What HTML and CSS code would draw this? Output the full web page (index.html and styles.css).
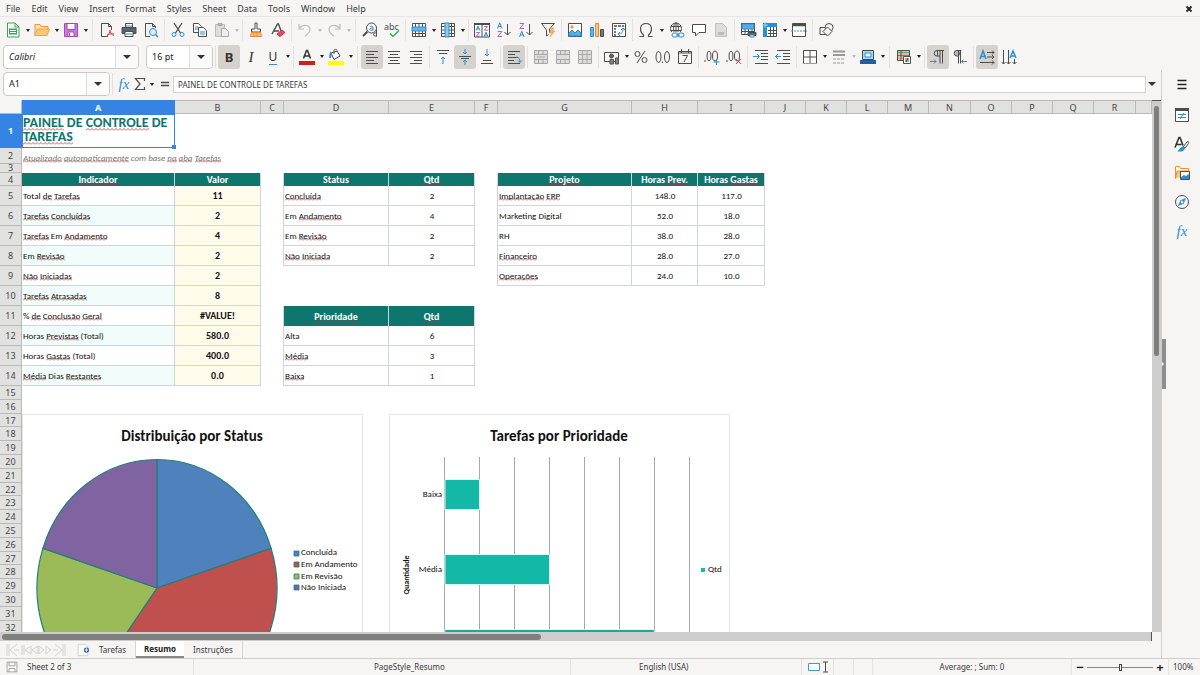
FILE: index.html
```html
<!DOCTYPE html>
<html lang="pt-BR">
<head>
<meta charset="utf-8">
<title>Resumo</title>
<link rel="stylesheet" href="styles.css">
</head>
<body>
<header class="top">
  <nav class="menubar" aria-label="Menu">
    <button>File</button><button>Edit</button><button>View</button><button>Insert</button><button>Format</button><button>Styles</button><button>Sheet</button><button>Data</button><button>Tools</button><button>Window</button><button>Help</button>
    <button class="close" aria-label="Close"><svg width="8" height="8" viewBox="0 0 8 8"><path d="M1.500 1.500l5 5M6.500 1.500l-5 5" stroke="#222" stroke-width="1.800"/></svg></button>
  </nav>

  <div class="toolbar" role="toolbar" aria-label="Standard">
    <button class="tool" aria-label="New"><svg viewBox="0 0 16 16"><path d="M2.500 1h7.500l4 4v10H2.500z" fill="#fff" stroke="#2fa84f"/><path d="M10 1v4h4" stroke="#2fa84f"/><path d="M4 6.500h8v6H4z" fill="#35a852" stroke="none"/><path d="M5 8.500h6M5 10.500h6" stroke="#fff"/></svg></button><button class="drop" aria-label="New options"></button>
    <button class="tool" aria-label="Open"><svg viewBox="0 0 16 16"><path d="M1 13V2.500h5l1 2h7V7" fill="#fde0b0" stroke="#e8973c"/><path d="M.5 13.500L3.500 7h12L13 13.500z" fill="#fbc877" stroke="#eda34f"/></svg></button><button class="drop" aria-label="Open options"></button>
    <button class="tool" aria-label="Save"><svg viewBox="0 0 16 16"><path d="M1.500 1.500h13v13h-13z" fill="#c77fd6" stroke="#a04db5"/><path d="M4 1.500h8v6H4z" fill="#fff" stroke="#a04db5"/><path d="M5 10h6v4.500H5z" fill="#fff" stroke="#a04db5"/><path d="M6.500 11v3" stroke="#a04db5"/></svg></button><button class="drop" aria-label="Save options"></button>
    <i class="sep wide"></i>
    <button class="tool" aria-label="Export PDF"><svg viewBox="0 0 16 16"><path d="M9 14.500H2.500v-13h7l3 3V8M9.500 1.500v3h3"/><path d="M7 15c3-2 4-5 4-7M11 8c0 3 2 5 4 5.500M8 13c2-1 4-1.500 7-1" stroke="#e03c3c"/></svg></button>
    <button class="tool" aria-label="Print"><svg viewBox="0 0 16 16"><path d="M4.500 5V1.500h7V5" fill="#fff"/><path d="M1 5.500h14v6H1z" fill="#5c6165" stroke="#4d4d4d"/><path d="M4 9.500h8v5H4z" fill="#fff"/><path d="M5 4h6M5 12h6" stroke="#2b8fd6"/></svg></button>
    <button class="tool" aria-label="Print preview"><svg viewBox="0 0 16 16"><path d="M7 14.500H2.500v-13h7l3 3V6M9.500 1.500v3h3"/><circle cx="10" cy="10" r="3.500" fill="#d9effb" stroke="#2b8fd6"/><path d="M12.500 12.500l2.500 2.500" stroke="#2b8fd6" stroke-width="1.500"/></svg></button>
    <i class="sep"></i>
    <button class="tool" aria-label="Cut"><svg viewBox="0 0 16 16"><path d="M4 1l6.500 10M12 1L5.500 11" stroke-width="1.300"/><circle cx="4" cy="12.500" r="2" stroke="#2b8fd6"/><circle cx="12" cy="12.500" r="2" stroke="#2b8fd6"/></svg></button>
    <button class="tool" aria-label="Copy"><svg viewBox="0 0 16 16"><path d="M1.500 1.500h5l3 3v6h-8z" fill="#fff"/><path d="M6.500 5.500h5l3 3v6h-8z" fill="#fff"/><path d="M3 5h3M3 7h3M8 10h5M8 12h5" stroke="#2b8fd6"/></svg></button>
    <button class="tool off" aria-label="Paste"><svg viewBox="0 0 16 16"><path d="M1.500 2.500h9v12h-9z" fill="#ddd" stroke="#bbb"/><path d="M4 1.500h4v2H4z" fill="#bbb" stroke="#aaa"/><path d="M7.500 6.500h4l3 3v5h-7z" fill="#eee" stroke="#aaa"/></svg></button><button class="drop off" aria-label="Paste options"></button>
    <i class="sep"></i>
    <button class="tool" aria-label="Clone formatting"><svg viewBox="0 0 16 16"><path d="M7 1h2v6h3.500v3h-9V7H7z" fill="#fff"/><path d="M3.500 10.500h9l1 4h-11z" fill="#fbc877" stroke="#e8873c"/><path d="M6 11v3M9 11v3" stroke="#e8873c"/></svg></button>
    <button class="tool" aria-label="Clear formatting"><svg viewBox="0 0 16 16"><path d="M2 12L7.500 2h1L11 9M4 9h5" stroke-width="1.400"/><path d="M7 12l5-4 3 2.500-5 4z" fill="#e84a5f" stroke="#c9344a"/></svg></button>
    <i class="sep"></i>
    <button class="tool" aria-label="Undo"><svg viewBox="0 0 16 16"><path d="M2 2v5h5M2 7c3-5 11-5 11 1 0 3-3 4-5 6.500" stroke="#bdbdbd" stroke-width="1.200"/></svg></button><button class="drop off" aria-label="Undo options"></button>
    <button class="tool" aria-label="Redo"><svg viewBox="0 0 16 16"><path d="M14 2v5H9M14 7C11 2 3 2 3 8c0 3 3 4 5 6.500" stroke="#bdbdbd" stroke-width="1.200"/></svg></button><button class="drop off" aria-label="Redo options"></button>
    <i class="sep wide"></i>
    <button class="tool" aria-label="Find and replace"><svg viewBox="0 0 16 16"><circle cx="9.500" cy="6" r="5"/><path d="M5.500 9.500L1 14" stroke-width="2"/><path d="M8 4.500c3-1 3 0 3 4M11 6c-4 0-4 2.500-1.500 2.500L11 7.500" stroke="#2b8fd6"/><path d="M14.500 7.500v7M14.500 11c-4-1-4 4 0 3"/></svg></button>
    <button class="tool" aria-label="Spelling"><svg viewBox="0 0 16 16"><text x="0" y="8" class="glyph">abc</text><path d="M6 11.500l3 3 6-6" stroke="#2fb463" stroke-width="1.500"/></svg></button>
    <i class="sep"></i>
    <button class="tool" aria-label="Row"><svg viewBox="0 0 16 16"><path d="M1.500 1.500h13v13h-13zM1.500 11.500h13M4.500 1.500v13M8 1.500v13M11.500 1.500v13" fill="#fff"/><path d="M1 5h14v4H1z" fill="#66b4ea" stroke="#2b8fd6"/></svg></button><button class="drop" aria-label="Row options"></button>
    <button class="tool" aria-label="Column"><svg viewBox="0 0 16 16"><path d="M1.500 1.500h13v13h-13zM1.500 4.500h13M1.500 8h13M1.500 11.500h13M11.500 1.500v13" fill="#fff"/><path d="M5 1h4v14H5z" fill="#8cc8f0" stroke="#2b8fd6"/></svg></button><button class="drop" aria-label="Column options"></button>
    <i class="sep"></i>
    <button class="tool" aria-label="Sort"><svg viewBox="0 0 16 16"><path d="M.5 1.500h15v13.500H.5zM8 2v13" fill="#fff"/><path d="M0 2h16" stroke-width="2"/><path d="M2.200 8.500L4 4l1.800 4.500M2.800 7h2.400M10.200 14.500L12 10l1.800 4.500M10.800 13h2.400" stroke="#2b8fd6"/><path d="M2.300 10.500h3.400l-3.400 3.700h3.600M10.300 4.500h3.400l-3.400 3.700h3.600" stroke="#b65bc4"/></svg></button>
    <button class="tool" aria-label="Sort ascending"><svg viewBox="0 0 16 16"><path d="M1.500 6.500L3.800 .8l2.300 5.700M2.400 4.500h2.800" stroke="#2b8fd6"/><path d="M1.800 9.500h4l-4 5h4.200" stroke="#b65bc4"/><path d="M11.500 2v11M8.500 10l3 3 3-3"/></svg></button>
    <button class="tool" aria-label="Sort descending"><svg viewBox="0 0 16 16"><path d="M1.500 15L3.800 9.300 6.100 15M2.400 13h2.800" stroke="#2b8fd6"/><path d="M1.800 1.500h4l-4 5h4.200" stroke="#b65bc4"/><path d="M11.500 2v11M8.500 10l3 3 3-3"/></svg></button>
    <button class="tool" aria-label="AutoFilter"><svg viewBox="0 0 16 16"><path d="M1.500 1.500h13L9.500 7v4M1.500 1.500L6.500 8v6l2-1.500" fill="none"/><path d="M12 6l-3 5h3l-2 4 5-6h-3l2-3z" fill="#fbb04c" stroke="#ef8d34" stroke-width=".5"/></svg></button>
    <i class="sep"></i>
    <button class="tool" aria-label="Image"><svg viewBox="0 0 16 16"><path d="M1.500 1.500h13v13h-13z" fill="#fff"/><path d="M2 14v-3l3-3 3 3 3-3 3 3v3z" fill="#58aee8" stroke="#2b8fd6"/><circle cx="5" cy="5" r="1.200" fill="#fbb04c" stroke="#ef8d34"/></svg></button>
    <button class="tool" aria-label="Chart"><svg viewBox="0 0 16 16"><path d="M1.500 5.500h3v9h-3z" fill="#66b4ea" stroke="#2b8fd6"/><path d="M6.500 1.500h3v13h-3z" fill="#fbc877" stroke="#e8873c"/><path d="M11.500 7.500h3v7h-3z" fill="#777"/></svg></button>
    <button class="tool" aria-label="Pivot table"><svg viewBox="0 0 16 16"><path d="M1.500 1.500h13v13h-13z" fill="#fff"/><path d="M3 4h10" stroke="#777" stroke-width="2" stroke-dasharray="3 1"/><path d="M4 6v8" stroke="#777" stroke-width="2" stroke-dasharray="2 1"/><path d="M7 12c4 0 5-2 5-5M10 8l2-2 2 2M9 10l-2 2 2 2" stroke="#2b8fd6"/></svg></button>
    <i class="sep"></i>
    <button class="tool" aria-label="Special character"><svg viewBox="0 0 16 16"><path d="M1.500 14.500h4V13C1 9 1.500 1.500 8 1.500S15 9 10.500 13v1.500h4" stroke-width="1.200"/></svg></button><button class="drop wide" aria-label="Character options"></button>
    <button class="tool" aria-label="Hyperlink"><svg viewBox="0 0 16 16"><circle cx="7" cy="6.500" r="5.500"/><ellipse cx="7" cy="6.500" rx="2.500" ry="5.500"/><path d="M2 4.500h10M2 8.500h10M7 1v11"/><path d="M3 10h13v6H3z" fill="#f6f5f4" stroke="none"/><rect x="3" y="11" width="6" height="4" rx="2" stroke="#2b8fd6"/><rect x="9" y="11" width="6" height="4" rx="2" stroke="#2b8fd6"/><path d="M7 13h4" stroke="#2b8fd6"/></svg></button>
    <button class="tool" aria-label="Comment"><svg viewBox="0 0 16 16"><path d="M1.500 2.500h13v8H8L4.500 14v-3.500h-3z" fill="#fff"/></svg></button>
    <button class="tool" aria-label="Headers and footers"><svg viewBox="0 0 16 16"><path d="M2.500 1.500h7l4 4v9h-11z" fill="#dcdcdc" stroke="#c0c0c0"/><path d="M5 10h6v3H5z" fill="#bdbdbd" stroke="none"/></svg></button>
    <i class="sep"></i>
    <button class="tool" aria-label="Print area"><svg viewBox="0 0 16 16"><path d="M1.500 1.500h13v11h-13zM1.500 9.500h13M5 1v11M8.500 1v11M12 1v11" fill="#fff"/><path d="M2 2h12v5H2z" fill="#59aee8" stroke="#2b8fd6"/><path d="M8 10.500h8v3H8z" fill="#5c6165"/><path d="M10 13h4v2h-4z" fill="#fff" stroke="#2b8fd6"/></svg></button>
    <button class="tool" aria-label="Freeze rows and columns"><svg viewBox="0 0 16 16"><path d="M1.500 1.500h13v13h-13zM6 8.500h9M6 11.500h9M8.500 5v10M11.500 5v10" fill="#fff"/><path d="M1 1h14v4H5v10H1z" fill="#2b8fd6" stroke="none"/><path d="M3 0v6M0 3h6" stroke="#9bd3f7"/></svg></button><button class="drop" aria-label="Freeze options"></button>
    <button class="tool" aria-label="Split window"><svg viewBox="0 0 16 16"><path d="M1.500 1.500h13v13h-13z" fill="#fff"/><path d="M1 3h14" stroke-width="2.500"/><path d="M0 9h16" stroke="#2b8fd6" stroke-dasharray="2 1"/></svg></button>
    <i class="sep"></i>
    <button class="tool" aria-label="Draw functions"><svg viewBox="0 0 16 16"><path d="M2 5.500h7.500v7H2z" fill="#f6f5f4"/><circle cx="11" cy="5.500" r="4" fill="#f6f5f4"/><path d="M9.500 5l4.500 4.500L9.500 14 5 9.500z" fill="#f6f5f4"/></svg></button>
  </div>

  <div class="toolbar format" role="toolbar" aria-label="Formatting">
    <label class="combo font"><select aria-label="Font name"><option>Calibri</option></select></label>
    <label class="combo size"><select aria-label="Font size"><option>16 pt</option></select></label>
    <i class="sep"></i>
    <button class="tool on" aria-label="Bold"><span class="letter bold">B</span></button>
    <button class="tool" aria-label="Italic"><span class="letter ital">I</span></button>
    <button class="tool" aria-label="Underline"><span class="letter under">U</span></button><button class="drop" aria-label="Underline options"></button>
    <i class="sep"></i>
    <button class="tool" aria-label="Font color"><svg viewBox="0 0 16 16"><path d="M4.500 9.500L7.500 1.500h1l3 8M5.500 7h5" stroke="#333" stroke-width="1.500"/><path d="M0 12h16v4H0z" fill="#c9211e" stroke="none"/></svg></button><button class="drop" aria-label="Font color options"></button>
    <button class="tool" aria-label="Background color"><svg viewBox="0 0 16 16"><path d="M3 4l6-2 3 5-6 3.500z" fill="#fff"/><path d="M6 5V1.500c0-1.500 3-1.500 3 0"/><path d="M3 3L2 9" stroke="#2b8fd6" stroke-width="2"/><path d="M0 12h16v4H0z" fill="#ff0" stroke="none"/></svg></button><button class="drop" aria-label="Background color options"></button>
    <i class="sep wide"></i>
    <button class="tool on" aria-label="Align left"><svg viewBox="0 0 16 16"><path d="M2 2.500h12M2 5.500h8M2 8.500h12M2 11.500h8M2 14.500h12"/></svg></button>
    <button class="tool" aria-label="Align center"><svg viewBox="0 0 16 16"><path d="M2 2.500h12M4 5.500h8M2 8.500h12M4 11.500h8M2 14.500h12"/></svg></button>
    <button class="tool" aria-label="Align right"><svg viewBox="0 0 16 16"><path d="M2 2.500h12M6 5.500h8M2 8.500h12M6 11.500h8M2 14.500h12"/></svg></button>
    <i class="sep"></i>
    <button class="tool" aria-label="Align top"><svg viewBox="0 0 16 16"><path d="M2 1.500h12M4 4.500h8"/><path d="M8 15V8M6 10l2-2 2 2" stroke="#2b8fd6"/></svg></button>
    <button class="tool on" aria-label="Center vertically"><svg viewBox="0 0 16 16"><path d="M2 7.500h12M4 9.500h8"/><path d="M8 0v5M6 3l2 2 2-2M8 16v-5M6 13l2-2 2 2" stroke="#2b8fd6"/></svg></button>
    <button class="tool" aria-label="Align bottom"><svg viewBox="0 0 16 16"><path d="M4 11.500h8M2 14.500h12"/><path d="M8 0v7M6 5l2 2 2-2" stroke="#2b8fd6"/></svg></button>
    <i class="sep"></i>
    <button class="tool on" aria-label="Wrap text"><svg viewBox="0 0 16 16"><path d="M2 2.500h12M2 5.500h7M2 8.500h10M2 11.500h6M2 14.500h12"/><path d="M10 8c3 0 4 2 4 5M12 11.500l2 2 2-2" stroke="#2b8fd6"/></svg></button>
    <i class="sep"></i>
    <button class="tool off" aria-label="Merge and center"><svg viewBox="0 0 16 16"><path d="M1.500 1.500h13v13h-13zM1.500 5.500h13M1.500 10.500h13M5.500 1.500v4M10 1.500v4M5.500 10.500v4M10 10.500v4M4 8h8" fill="#ddd" stroke="#a8a8a8"/></svg></button>
    <button class="tool off" aria-label="Merge cells"><svg viewBox="0 0 16 16"><path d="M1.500 1.500h13v13h-13zM1.500 5.500h13M1.500 10.500h13M5.500 1.500v4M10 1.500v4M5.500 10.500v4M10 10.500v4" fill="#ddd" stroke="#a8a8a8"/></svg></button>
    <button class="tool off" aria-label="Split cells"><svg viewBox="0 0 16 16"><path d="M1.500 1.500h13v13h-13zM1.500 5.500h13M1.500 10.500h13M5.500 1.500v13M10 1.500v13" fill="#ddd" stroke="#a8a8a8"/></svg></button>
    <i class="sep"></i>
    <button class="tool" aria-label="Currency"><svg viewBox="0 0 16 16"><path d="M.5 3.500h14v9H.500z"/><circle cx="7.500" cy="7" r="2" fill="#666"/><path d="M6 10.500h3.500V15H6zM11.500 9h3v6h-3z" fill="#888"/></svg></button><button class="drop" aria-label="Currency options"></button>
    <button class="tool" aria-label="Percent"><svg viewBox="0 0 16 16"><circle cx="4.500" cy="5" r="2.500"/><circle cx="11.500" cy="11" r="2.500"/><path d="M12 2L4 14"/></svg></button>
    <button class="tool" aria-label="Number"><svg viewBox="0 0 16 16"><ellipse cx="3.500" cy="8" rx="2.500" ry="5.500"/><ellipse cx="12" cy="8" rx="2.500" ry="5.500"/><path d="M7.500 12.500v1.500"/></svg></button>
    <button class="tool" aria-label="Date"><svg viewBox="0 0 16 16"><path d="M1.500 2.500h13v12h-13zM4.500 0v4M11.500 0v4M1.500 4h13M5.500 6.500h5L7 13"/></svg></button>
    <i class="sep"></i>
    <button class="tool" aria-label="Add decimal place"><svg viewBox="0 0 16 16"><ellipse cx="5" cy="7" rx="2" ry="5"/><ellipse cx="11" cy="7" rx="2.500" ry="5"/><path d="M1 11v2"/><path d="M12.500 10v6M9.500 13h6" stroke="#2b8fd6"/></svg></button>
    <button class="tool" aria-label="Delete decimal place"><svg viewBox="0 0 16 16"><ellipse cx="5" cy="7" rx="2" ry="5"/><ellipse cx="11" cy="7" rx="2.500" ry="5"/><path d="M1 11v2"/><path d="M10 10l5 5M15 10l-5 5" stroke="#e03c3c"/></svg></button>
    <i class="sep"></i>
    <button class="tool" aria-label="Increase indent"><svg viewBox="0 0 16 16"><path d="M2 1.500h13M8 4.500h7M8 7.500h7M8 10.500h7M2 14.500h13"/><path d="M0 7.500h6M4 5l2.500 2.500L4 10" stroke="#2b8fd6"/></svg></button>
    <button class="tool" aria-label="Decrease indent"><svg viewBox="0 0 16 16"><path d="M2 1.500h13M8 4.500h7M8 7.500h7M8 10.500h7M2 14.500h13"/><path d="M0 7.500h6M3 5L.5 7.500 3 10" stroke="#2b8fd6"/></svg></button>
    <i class="sep"></i>
    <button class="tool" aria-label="Borders"><svg viewBox="0 0 16 16"><path d="M1.500 1.500h13v13h-13zM8 1.500v13M1.500 8h13" fill="#fff"/><path d="M1 14.500h14" stroke="#e8873c"/></svg></button><button class="drop" aria-label="Border options"></button>
    <button class="tool" aria-label="Border style"><svg viewBox="0 0 16 16"><path d="M2 2.500h12M2 6h12" stroke="#999" stroke-width="2"/><path d="M2 10h12M2 14h12" stroke="#999" stroke-dasharray="3 1"/></svg></button><button class="drop off" aria-label="Border style options"></button>
    <button class="tool" aria-label="Border color"><svg viewBox="0 0 16 16"><path d="M2.500 1.500h11v9h-11z" fill="#aed8f5" stroke="#444"/><path d="M5 4h6v4H5z" fill="#f6f5f4" stroke="#2b8fd6"/><path d="M0 11h16v4H0z" fill="#1f5fa8" stroke="none"/></svg></button><button class="drop" aria-label="Border color options"></button>
    <i class="sep wide"></i>
    <button class="tool" aria-label="Conditional formatting"><svg viewBox="0 0 16 16"><path d="M1.500 1.500h12v10h-12z" fill="#fff"/><path d="M2 3.500h11" stroke="#4db36b" stroke-width="2"/><path d="M2 6.500h11" stroke="#e2574c" stroke-width="2"/><path d="M2 9.500h5" stroke="#eda34f" stroke-width="2"/><path d="M5 1v11"/><path d="M7.500 7.500h7v7h-7z" fill="#fff"/><path d="M9 10h4M9 12h4M12 9l-2 4"/></svg></button><button class="drop" aria-label="Conditional options"></button>
    <i class="sep"></i>
    <button class="tool on" aria-label="Left to right"><svg viewBox="0 0 16 16"><path d="M7.500 7V1.500M14 1.500H7a2.800 2.800 0 0 0 0 5.600h3M10 1.500v13M12.500 1.500v13"/><path d="M0 12.500h6M4 10.500l2 2-2 2" stroke="#2b8fd6"/></svg></button>
    <button class="tool" aria-label="Right to left"><svg viewBox="0 0 16 16"><path d="M9 1.500H5a2.800 2.800 0 0 0 0 5.600h1.500z" fill="#bbb"/><path d="M6.500 1.500v13M8.500 1.500v13"/><path d="M9 12.500h6M11.500 10.500l-2 2 2 2" stroke="#2b8fd6"/></svg></button>
    <i class="sep"></i>
    <button class="tool on" aria-label="Text direction left to right"><svg viewBox="0 0 16 16"><path d="M1 10L4 2l3 8M2 7.500h4" stroke="#2b8fd6" stroke-width="1.500"/><path d="M8 3.500h7M8 8h7M1 13.500h14M13 1.500l2 2-2 2M13 6l2 2-2 2M13 11.500l2 2-2 2"/></svg></button>
    <button class="tool" aria-label="Text direction top to bottom"><svg viewBox="0 0 16 16"><path d="M9 9l3-7 3 7M10 7h4" stroke="#2b8fd6" stroke-width="1.500"/><path d="M2.500 1v14M7.500 1v14M13.500 10v5M.5 13l2 2 2-2M5.500 13l2 2 2-2M11.500 13l2 2 2-2"/></svg></button>
  </div>
</header>

<main class="work">
  <section class="doc">
    <div class="formula">
      <div class="namebox"><input aria-label="Name box" value="A1"><button aria-label="Name list"></button></div>
      <i class="sep"></i>
      <button class="tool wizard" aria-label="Function wizard"><span class="fx">fx</span></button>
      <button class="tool sum" aria-label="Select function"><svg viewBox="0 0 16 16"><path d="M12.500 5V2.500h-9L8 8l-4.500 5.500h9V11" stroke-width="1.200"/></svg></button><button class="drop wide" aria-label="Sum options"></button>
      <button class="tool equals" aria-label="Formula"><svg viewBox="0 0 16 16"><path d="M4 6.500h8M4 9.500h8" stroke-width="1.500"/></svg></button>
      <input class="line" aria-label="Input line" value="PAINEL DE CONTROLE DE TAREFAS">
      <button class="expand" aria-label="Expand formula bar"></button>
    </div>

    <div class="view">
      <div class="sheet">
        <table class="grid">
          <colgroup><col class="w22"><col class="w153"><col class="w86"><col class="w23"><col class="w105"><col class="w86"><col class="w23"><col class="w134"><col class="w66"><col class="w67"><col class="w41"><col class="w41"><col class="w41"><col class="w41"><col class="w42"><col class="w41"><col class="w41"><col class="w41"><col class="w42"><col></colgroup>
          <thead><tr><th class="corner"></th><th class="sel">A</th><th>B</th><th>C</th><th>D</th><th>E</th><th>F</th><th>G</th><th>H</th><th>I</th><th>J</th><th>K</th><th>L</th><th>M</th><th>N</th><th>O</th><th>P</th><th>Q</th><th>R</th><th></th></tr></thead>
          <tbody>
            <tr class="r34"><th class="sel">1</th><td class="title"><u>PAINEL</u> DE <u>CONTROLE</u> DE <u>TAREFAS</u></td></tr>
            <tr class="r16"><th>2</th><td class="note" colspan="3"><u>Atualizado</u> <u>automaticamente</u> com base <u>na</u> <u>aba</u> <u>Tarefas</u></td></tr>
            <tr class="r9"><th>3</th></tr>
            <tr class="r13"><th>4</th><td class="h"><u>Indicador</u></td><td class="h">Valor</td><td class="edge"></td><td class="h">Status</td><td class="h"><u>Qtd</u></td><td class="edge"></td><td class="h"><u>Projeto</u></td><td class="h">Horas <u>Prev.</u></td><td class="h">Horas <u>Gastas</u></td></tr>
            <tr class="r20"><th>5</th><td class="c">Total <u>de</u> <u>Tarefas</u></td><td class="v">11</td><td class="edge"></td><td class="c"><u>Concluída</u></td><td class="c n">2</td><td class="edge"></td><td class="c"><u>Implantação</u> <u>ERP</u></td><td class="c n">148.0</td><td class="c n">117.0</td></tr>
            <tr class="r20"><th>6</th><td class="c alt"><u>Tarefas</u> <u>Concluídas</u></td><td class="v">2</td><td class="edge"></td><td class="c">Em <u>Andamento</u></td><td class="c n">4</td><td class="edge"></td><td class="c">Marketing Digital</td><td class="c n">52.0</td><td class="c n">18.0</td></tr>
            <tr class="r20"><th>7</th><td class="c"><u>Tarefas</u> Em <u>Andamento</u></td><td class="v">4</td><td class="edge"></td><td class="c">Em <u>Revisão</u></td><td class="c n">2</td><td class="edge"></td><td class="c">RH</td><td class="c n">38.0</td><td class="c n">28.0</td></tr>
            <tr class="r20"><th>8</th><td class="c alt">Em <u>Revisão</u></td><td class="v">2</td><td class="edge"></td><td class="c"><u>Não</u> <u>Iniciada</u></td><td class="c n">2</td><td class="edge"></td><td class="c"><u>Financeiro</u></td><td class="c n">28.0</td><td class="c n">27.0</td></tr>
            <tr class="r20"><th>9</th><td class="c"><u>Não</u> <u>Iniciadas</u></td><td class="v">2</td><td></td><td></td><td></td><td class="edge"></td><td class="c"><u>Operações</u></td><td class="c n">24.0</td><td class="c n">10.0</td></tr>
            <tr class="r20"><th>10</th><td class="c alt"><u>Tarefas</u> <u>Atrasadas</u></td><td class="v">8</td></tr>
            <tr class="r20"><th>11</th><td class="c">% <u>de</u> <u>Conclusão</u> <u>Geral</u></td><td class="v">#VALUE!</td><td class="edge"></td><td class="h"><u>Prioridade</u></td><td class="h"><u>Qtd</u></td></tr>
            <tr class="r20"><th>12</th><td class="c alt">Horas <u>Previstas</u> (Total)</td><td class="v">580.0</td><td class="edge"></td><td class="c">Alta</td><td class="c n">6</td></tr>
            <tr class="r20"><th>13</th><td class="c">Horas <u>Gastas</u> (Total)</td><td class="v">400.0</td><td class="edge"></td><td class="c"><u>Média</u></td><td class="c n">3</td></tr>
            <tr class="r20"><th>14</th><td class="c alt"><u>Média</u> Dias <u>Restantes</u></td><td class="v">0.0</td><td class="edge"></td><td class="c"><u>Baixa</u></td><td class="c n">1</td></tr>
            <tr class="r14"><th>15</th></tr><tr class="r14"><th>16</th></tr><tr class="r13"><th>17</th></tr><tr class="r14"><th>18</th></tr><tr class="r14"><th>19</th></tr><tr class="r14"><th>20</th></tr><tr class="r14"><th>21</th></tr><tr class="r13"><th>22</th></tr><tr class="r14"><th>23</th></tr><tr class="r14"><th>24</th></tr><tr class="r14"><th>25</th></tr><tr class="r14"><th>26</th></tr><tr class="r13"><th>27</th></tr><tr class="r14"><th>28</th></tr><tr class="r14"><th>29</th></tr><tr class="r14"><th>30</th></tr><tr class="r14"><th>31</th></tr><tr class="r13"><th>32</th></tr>
          </tbody>
        </table>

        <svg class="chart status" viewBox="0 0 341 260" role="img" aria-label="Distribuição por Status">
          <path d="M.5 260V.500h340V260" fill="#fff" stroke="#e4e4e4"/>
          <text x="170" y="27" class="ct">Distribuição por Status</text>
          <g stroke="#1f7f7a" stroke-width="1.200">
            <path d="M135 174V45.500A120 128.500 0 0 1 249.100 134.300z" fill="#4f81bd"/>
            <path d="M135 174L249.100 134.300A120 128.500 0 0 1 64.500 278z" fill="#c0504d"/>
            <path d="M135 174L64.500 278A120 128.500 0 0 1 20.900 134.300z" fill="#9bbb59"/>
            <path d="M135 174L20.900 134.300A120 128.500 0 0 1 135 45.500z" fill="#8064a2"/>
          </g>
          <g stroke="#1f7f7a" stroke-width=".8"><path d="M272 137h5v5h-5z" fill="#4f81bd"/><path d="M272 148h5v5h-5z" fill="#c0504d"/><path d="M272 160h5v5h-5z" fill="#9bbb59"/><path d="M272 171h5v5h-5z" fill="#8064a2"/></g>
          <g class="cl"><text x="279" y="141">Concluída</text><text x="279" y="153">Em Andamento</text><text x="279" y="165">Em Revisão</text><text x="279" y="176">Não Iniciada</text></g>
        </svg>

        <svg class="chart priority" viewBox="0 0 341 260" role="img" aria-label="Tarefas por Prioridade">
          <path d="M.5 260V.500h340V260" fill="#fff" stroke="#e4e4e4"/>
          <text x="170" y="27" class="ct">Tarefas por Prioridade</text>
          <path d="M55.500 43v217M90.500 43v217M125.500 43v217M160.500 43v217M195.500 43v217M230.500 43v217M265.500 43v217M300.500 43v217" stroke="#a8a8a8"/>
          <g fill="#14b8a6" stroke="#d5fbf6"><path d="M56 65.500h34.500v30H56z"/><path d="M56 140.500h104.500v30H56z"/><path d="M56 215.500h209v30H56z"/></g>
          <path d="M56 217h209" stroke="#27998e"/>
          <g class="cl"><text x="53" y="83" text-anchor="end">Baixa</text><text x="53" y="158" text-anchor="end">Média</text><text x="319" y="158">Qtd</text><text class="axis" transform="translate(20 161) rotate(-90)" text-anchor="middle">Quantidade</text></g>
          <path d="M312 154h4v4h-4z" fill="#14b8a6" stroke="none"/>
        </svg>
      </div>
      <div class="vscroll"><i></i></div>
      <div class="hscroll"><i></i></div>
    </div>

    <div class="tabs">
      <svg class="jump" viewBox="0 0 60 14"><path d="M1 1v12M3 1v12M11 1L4 7l7 6M8 7h5M16 2v10M18 2v10M25 3l-6 4 6 4zM32 3l-6 4 6 4zM33 3l5 4-5 4zM40 3l5 4-5 4zM49 1l7 6-7 6M52 7h-5M57 1v12M59 1v12"/></svg>
      <button class="add" aria-label="Add sheet"><svg viewBox="0 0 16 16"><path d="M2.500 1.500h8l3 3v10h-11z" fill="#fff" stroke="#ccc"/><circle cx="12" cy="8" r="3" fill="#2a68b0" stroke="none"/><path d="M10 8h4M12 6v4" stroke="#fff"/></svg></button>
      <button class="tab">Tarefas</button><button class="tab active">Resumo</button><button class="tab">Instruções</button>
    </div>
  </section>

  <aside class="side" aria-label="Sidebar">
    <button class="menu" aria-label="Sidebar settings"><svg viewBox="0 0 16 16"><path d="M3.500 4.500h9M3.500 8.500h9M3.500 12.500h9" stroke="#222" stroke-width="1.300"/></svg></button>
    <button aria-label="Properties"><svg viewBox="0 0 16 16"><path d="M1.500 1.500h13v13h-13z" fill="#fff"/><path d="M1 2.500h14" stroke-width="3"/><path d="M4 7.500h8M4 10.500h8M10 6l-4 6" stroke="#2b8fd6"/></svg></button>
    <button aria-label="Styles"><svg viewBox="0 0 16 16"><path d="M1 11.500L5 1.500h1l3 8M2.500 8.500h5" stroke="#333" stroke-width="1.600"/><path d="M9 11l4-5c2-1 2 0 1.500 1.500L11 12z" fill="#fff"/><path d="M4 15c2 0 2-4 5-4 2 0 2 3-1 4z" fill="#2b8fd6" stroke="#2b8fd6"/></svg></button>
    <button aria-label="Gallery"><svg viewBox="0 0 16 16"><path d="M1.500 13.500v-12h4l1 2h8V6" fill="#fff" stroke="#ef8d34"/><path d="M1.500 13.500L3 6h12v4" fill="#fbc877" stroke="#ef8d34"/><path d="M6.500 6.500h9v8h-9z" fill="#fff"/><path d="M7 14v-2l3-2 2 1 3-2v5z" fill="#2b8fd6" stroke="none"/></svg></button>
    <button aria-label="Navigator"><svg viewBox="0 0 16 16"><circle cx="8" cy="8" r="6.500"/><path d="M11.500 4.500l-2 5-5 2 2-5z" fill="#2b8fd6" stroke="#2b8fd6" stroke-width=".6"/><circle cx="8" cy="8" r="1.200" fill="#fff" stroke="none"/></svg></button>
    <button aria-label="Functions"><span class="fx">fx</span></button>
    <button class="handle" aria-label="Hide sidebar"></button>
  </aside>
</main>

<footer class="statusbar">
  <span class="pos"><svg viewBox="0 0 16 16"><path d="M1.500 1.500h13v13h-13zM4 1.500v5h8v-5M4 14.500V10h8v4.500" fill="#fff" stroke="#888"/></svg>Sheet 2 of 3</span>
  <span></span>
  <span class="left">PageStyle_Resumo</span>
  <span class="lang">English (USA)</span>
  <span class="mode"><svg class="cursor" viewBox="0 0 20 12"><path d="M.5 2.500h11v7H.500z" fill="#fff" stroke="#3f97cf"/><path d="M15 1h5M17.500 1v10M15 11h5"/></svg></span>
  <span></span><span></span>
  <span class="avg">Average: ; Sum: 0</span>
  <span class="zoom"><button aria-label="Zoom out">−</button><input type="range" min="0" max="100" value="50" aria-label="Zoom"><button aria-label="Zoom in">+</button></span>
  <span class="pct">100%</span>
</footer>
</body>
</html>
```
FILE: styles.css
```css
* { box-sizing: border-box; }
html, body { height: 100%; }
body {
  margin: 0;
  display: flex;
  flex-direction: column;
  overflow: hidden;
  background: #f6f5f4;
  color: #3a3a3a;
  font: 9px/12px "Noto Sans", "Open Sans", sans-serif;
}
button, input, select { font: inherit; color: inherit; margin: 0; padding: 0; border: 0; background: none; border-radius: 0; outline: 0; }
svg { fill: none; stroke: #4d4d4d; display: block; flex: none; overflow: visible; }
svg text { stroke: none; }

.menubar { display: flex; align-items: center; gap: 1px; height: 17px; padding: 1px 7px 0 1px; border-bottom: 1px solid #e6e5e4; }
.menubar button { padding: 0 5px; }
.menubar .close { margin-left: auto; padding: 0; }

.toolbar { display: flex; align-items: center; height: 26px; padding-left: 2px; }
.toolbar.format { height: 27px; padding-left: 3px; }
.tool { display: flex; align-items: center; justify-content: center; width: 22px; height: 24px; flex: none; border-radius: 3px; }
.tool svg { width: 16px; height: 16px; }
.tool.on { background: #d5d1cd; }
.drop { width: 7px; height: 24px; flex: none; display: flex; align-items: center; justify-content: center; }
.drop::before { content: ""; border: 2px solid transparent; border-top: 3px solid #222; border-bottom: 0; }
.drop.off::before { border-top-color: #bbb; }
.drop.wide { width: 9px; }
.sep { width: 1px; height: 22px; margin: 0 2px; background: #e2e1df; flex: none; }
.sep.wide { margin: 0 3px; }

.glyph { font-family: "Noto Sans", sans-serif; font-size: 9px; fill: #4d4d4d; }
.letter { font-size: 13px; line-height: 16px; color: #333; }
.bold { font-weight: 700; }
.ital { font-family: "Liberation Serif", serif; font-style: italic; font-size: 15px; }
.under { border-bottom: 1px solid #2b8fd6; line-height: 15px; font-size: 12px; }
.fx { font: italic 15px/16px "Liberation Serif", serif; color: #2b8fd6; }

.combo { position: relative; display: block; height: 24px; border: 1px solid #cdc9c5; border-radius: 4px; background: #fff; }
.combo select { appearance: none; width: 100%; height: 22px; padding-left: 5px; color: #222; }
.combo.font { width: 136px; margin-right: 7px; }
.combo.font select { font-style: italic; }
.combo.size { width: 67px; }
.combo::after {
  content: "";
  position: absolute;
  top: 0; right: 0; bottom: 0;
  width: 22px;
  border-left: 1px solid #dedbd8;
  background: #fbfafa;
  clip-path: inset(0 round 0 3px 3px 0);
  pointer-events: none;
}
.combo::before { content: ""; position: absolute; z-index: 1; top: 9px; right: 7px; border: 4px solid transparent; border-top-color: #333; border-bottom: 0; pointer-events: none; }

.work { flex: 1; display: flex; min-height: 0; }
.doc { flex: 1; min-width: 0; display: flex; flex-direction: column; }
.formula { display: flex; align-items: center; height: 30px; padding: 0 6px 2px 3px; }
.namebox { display: flex; width: 107px; height: 24px; border: 1px solid #cdc9c5; border-radius: 4px; background: #fff; overflow: hidden; }
.namebox input { flex: 1; min-width: 0; padding-left: 5px; color: #222; }
.namebox button { width: 23px; border-left: 1px solid #dedbd8; background: #fbfafa; display: flex; align-items: center; justify-content: center; }
.namebox button::before, .expand::before { content: ""; border: 4px solid transparent; border-top-color: #333; border-bottom: 0; }
.formula .wizard { width: 18px; }
.formula .sum { width: 14px; }
.formula .equals { width: 17px; }
.line { flex: 1; min-width: 0; height: 17px; padding: 0 4px; margin: 0 2px 0 0; border: 1px solid #d4d2d0; background: #fff; font-size: 8px; }
.formula .expand { width: 7px; display: flex; justify-content: center; }

.view { flex: 1; min-height: 0; display: grid; grid-template: minmax(0, 1fr) 9px / minmax(0, 1fr) 9px; }
.sheet { position: relative; overflow: hidden; background: #fff; }
.vscroll { background: #cdcdcd; padding: 5px 2px; border-top: 1px solid #555; }
.vscroll i { display: block; width: 5px; height: 48%; border-radius: 3px; background: #7f7f7f; }
.hscroll { background: #cdcdcd; padding: 2px; border-right: 1px solid #555; }
.hscroll i { display: block; width: 47%; height: 6px; border-radius: 3px; background: #7f7f7f; }

.grid { width: 100%; table-layout: fixed; border-spacing: 0; font: 9px/12px Carlito, Lato, sans-serif; color: #111; }
.grid th, .grid td { padding: 0; height: inherit; white-space: nowrap; }
.w22 { width: 22px; } .w23 { width: 23px; } .w41 { width: 41px; } .w42 { width: 42px; } .w66 { width: 66px; } .w67 { width: 67px; }
.w86 { width: 86px; } .w105 { width: 105px; } .w134 { width: 134px; } .w153 { width: 153px; }
.grid th { font: 9px/9px "Noto Sans", sans-serif; color: #444; background: #e1e1df; border-right: 1px solid #b9b9b7; border-bottom: 1px solid #b9b9b7; }
.grid thead tr { height: 14px; }
.grid thead th { border-top: 1px solid #b9b9b7; line-height: 11px; }
.grid th.corner { background: #f6f5f4; border-top-color: #f6f5f4; border-bottom-color: #b9b9b7; }
.grid th.sel { background: #3584e4; color: #fff; font-weight: 700; border-color: #3584e4; }
.r9 { height: 9px; } .r13 { height: 13px; } .r14 { height: 14px; } .r16 { height: 16px; } .r20 { height: 20px; } .r34 { height: 34px; }
.r9 th { line-height: 8px; }
.grid .title { position: relative; white-space: normal; color: #0f766e; font-weight: 700; font-size: 14px; line-height: 14px; vertical-align: top; box-shadow: inset 0 0 0 1px #3584e4; padding: 2px 0 0 1px; }
.title::after { content: ""; position: absolute; right: -1px; bottom: -1px; width: 4px; height: 4px; background: #3584e4; }
.note { color: #777; font-style: italic; vertical-align: bottom; }
.grid .note, .grid .c { padding-left: 1px; }
.h { background: #0f766e; color: #fff; font-weight: 700; font-size: 10px; text-align: center; border-right: 1px solid #d1d5db; line-height: 11px; }
.c { border-right: 1px solid #d1d5db; border-bottom: 1px solid #d1d5db; }
.alt { background: #f0fdfa; }
.v { background: #fffbeb; border-right: 1px solid #d1d5db; border-bottom: 1px solid #d1d5db; font-weight: 700; font-size: 10px; text-align: center; }
.n { text-align: center; }
.edge { border-right: 1px solid #d1d5db; }

/* Spelling marks: a small wave tiled along the foot of each word. */
.grid u {
  text-decoration: none;
  background: url("data:image/svg+xml,%3Csvg xmlns='http://www.w3.org/2000/svg' width='4' height='3'%3E%3Cpath d='M0 2.5L2 .5L4 2.5' fill='none' stroke='%23e01b24' stroke-width='.8'/%3E%3C/svg%3E") left bottom repeat-x;
}

.chart { position: absolute; top: 314px; width: 341px; height: 260px; font-family: Carlito, Lato, sans-serif; }
.status { left: 22px; }
.priority { left: 389px; }
.chart text { fill: #111; }
.ct { font-size: 15px; font-weight: 700; text-anchor: middle; }
.cl { font-size: 9px; }
.axis { font-weight: 700; font-size: 8px; }

.tabs { display: flex; align-items: stretch; height: 17px; padding-left: 6px; font-size: 8px; }
.jump { width: 60px; height: 14px; margin: 2px 10px 0 0; stroke: #d2d1cf; }
.add { width: 14px; display: flex; align-items: center; }
.add svg { width: 14px; height: 14px; }
.tab { padding: 0 9px; border-right: 1px solid #d6d5d3; }
.tab.active { padding: 0 8px; background: #fff; font-weight: 700; border-right: 0; border-bottom: 2px solid #888; color: #222; }

.side { position: relative; width: 39px; padding: 2px 0 0 2px; border-left: 1px solid #d0cfcd; display: flex; flex-direction: column; align-items: center; gap: 5px; }
.side button { height: 24px; display: flex; align-items: center; }
.side .menu { margin-bottom: 2px; }
.side svg { width: 16px; height: 16px; }
.side .handle { position: absolute; left: 0; top: 269px; width: 4px; height: 50px; background: #8e8e8e; }
.handle::before { content: ""; border: 2px solid transparent; border-left-color: #fff; border-right: 0; }

.statusbar {
  display: grid;
  grid-template-columns: 194fr 174fr 203fr 231fr 32px 20px 19px 199fr 97px 31px;
  height: 17px;
  border-top: 1px solid #d0cfcd;
  white-space: nowrap;
  font-size: 8px;
}
.statusbar > span { display: flex; align-items: center; border-right: 1px solid #e2e1df; min-width: 0; }
.statusbar > span:nth-child(2), .statusbar > span:last-child { border-right: 0; }
.pos { padding-left: 6px; gap: 9px; }
.pos svg { width: 12px; height: 12px; }
.statusbar .left { padding-left: 6px; }
.statusbar .lang { padding-left: 68px; }
.mode { padding-left: 6px; }
.cursor { width: 20px; height: 12px; }
.avg { justify-content: center; }
.zoom { justify-content: center; gap: 3px; }
.zoom button { font-size: 13px; font-weight: 700; width: 8px; line-height: 12px; color: #222; }
.zoom input { appearance: none; width: 66px; height: 12px; }
.zoom input::-webkit-slider-runnable-track { height: 1px; background: #888; }
.zoom input::-webkit-slider-thumb { appearance: none; width: 3px; height: 7px; margin-top: -3px; background: #f6f5f4; border: 1px solid #444; }
.pct { padding-left: 4px; }
```
